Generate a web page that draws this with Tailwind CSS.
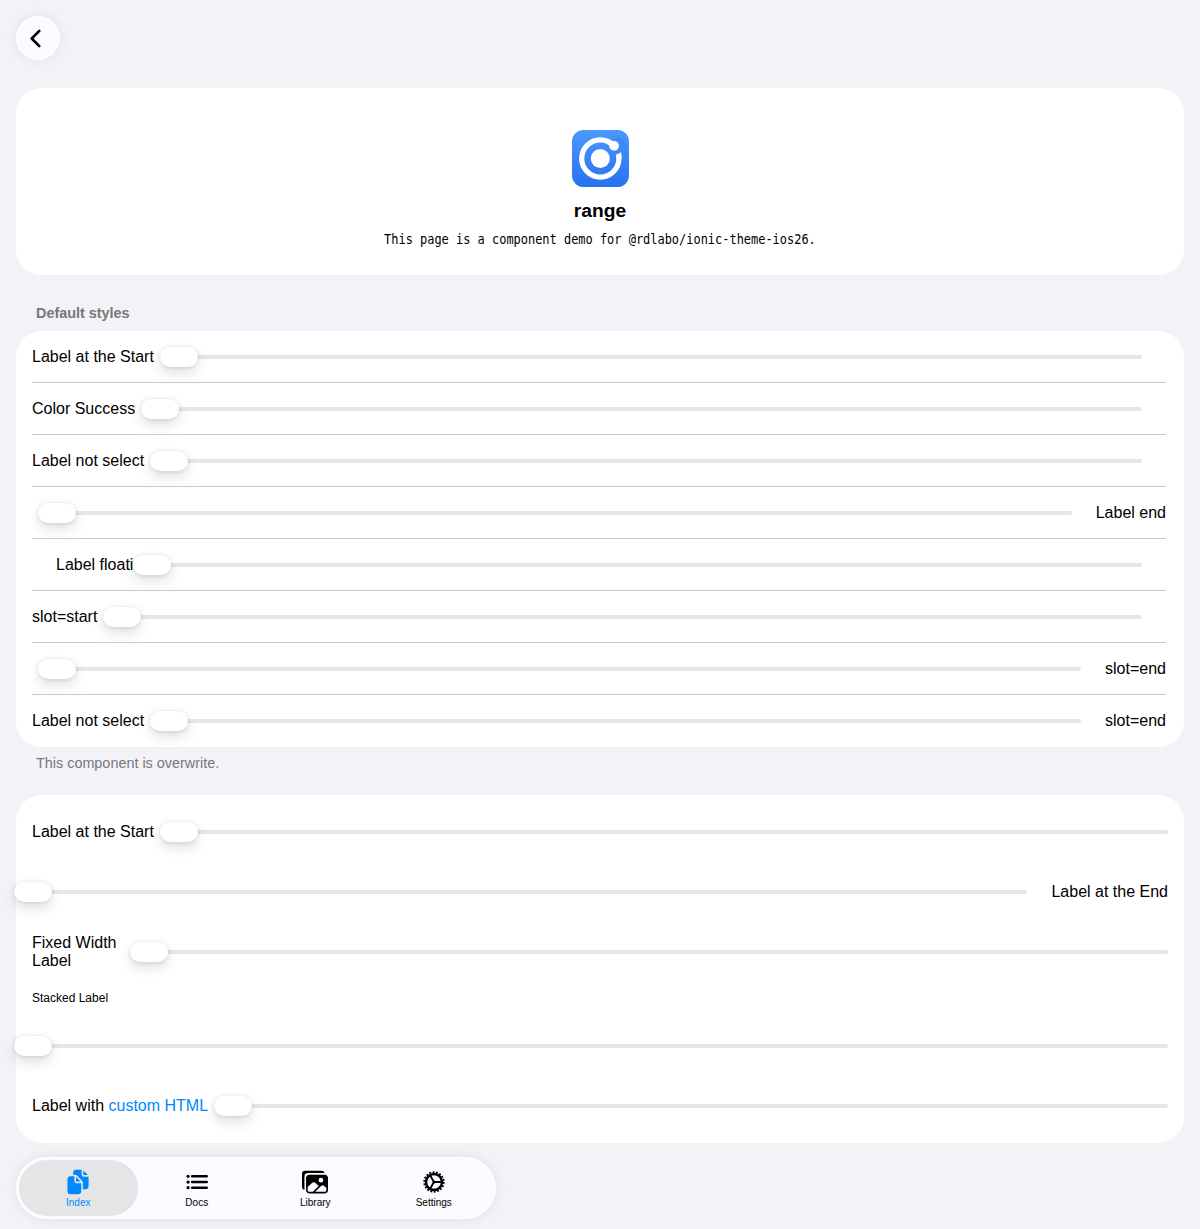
<!DOCTYPE html>
<html lang="en">
<head>
<meta charset="utf-8">
<title>range</title>
<script src="https://cdn.jsdelivr.net/npm/@tailwindcss/browser@4"></script>
</head>
<body class="h-[1229px] overflow-hidden bg-[#f2f2f7] px-4 font-['Liberation_Sans',Arial,sans-serif] text-base leading-[18px] text-black">
<header class="flex h-[88px] pt-4">
  <button class="flex size-11 items-center rounded-full bg-[#fafaff] pt-px pl-[6px] shadow-[inset_0_0_2px_1px_#fff,0_0_12px_rgba(0,0,0,0.08)]" aria-label="Back">
    <svg class="size-[27px]" viewBox="0 0 512 512" fill="none" stroke="#000" stroke-width="50" stroke-linecap="round" stroke-linejoin="round"><path d="M328 112 184 256l144 144"/></svg>
  </button>
</header>

<main>
  <section class="flex h-[187px] flex-col items-center rounded-[26px] bg-white pt-[42px]">
    <svg class="size-[57px] shrink-0" viewBox="0 0 57 57">
      <defs><linearGradient id="logo" x2="0" y2="1"><stop stop-color="#4a98ff"/><stop offset="1" stop-color="#2871f0"/></linearGradient></defs>
      <rect width="57" height="57" rx="11.5" fill="url(#logo)"/>
      <circle cx="28.3" cy="28.5" r="9.5" fill="#fff"/>
      <circle cx="28.3" cy="28.5" r="18.6" fill="none" stroke="#fff" stroke-width="5.2"/>
      <path d="m37 17 9-11 9 8-1 8-12 5z" fill="#3d88fb"/>
      <path d="M36.2 11.6a18.6 18.6 0 0 1 3.8 2.3" fill="none" stroke="#fff" stroke-width="5.2"/>
      <path d="M44 24.5q3.2-.6 5-2.6a22 22 0 0 1 .5 6.6h-5.2a17 17 0 0 0-.3-4z" fill="#fff"/>
      <circle cx="42.1" cy="15.9" r="4.9" fill="#fff"/>
    </svg>
    <h1 class="mt-3 text-[19.2px] leading-6 font-bold">range</h1>
    <p class="mt-[6px] scale-x-[0.8305] font-['DejaVu_Sans_Mono',monospace] text-[14.4px] leading-5 whitespace-nowrap">This page is a component demo for @rdlabo/ionic-theme-ios26.</p>
  </section>

  <h2 class="flex h-14 items-end px-5 pb-[9px] text-[14.4px] font-bold text-[#77777c]">Default styles</h2>
  <section class="overflow-hidden rounded-[26px] bg-white pr-[18px] pl-4">
    <div class="flex h-[52px] items-center overflow-hidden border-b border-[#c8c7cc]">
      <span class="w-[128px] shrink-0">Label at the Start</span>
      <div class="mr-6 flex h-1 flex-1 items-center rounded-full bg-[#e6e6e6]"><i class="h-5 w-[38px] rounded-full bg-white shadow-[0_0.5px_4px_rgba(0,0,0,0.12),0_6px_13px_rgba(0,0,0,0.12)]"></i></div>
    </div>
    <div class="flex h-[52px] items-center overflow-hidden border-b border-[#c8c7cc]">
      <span class="w-[109px] shrink-0">Color Success</span>
      <div class="mr-6 flex h-1 flex-1 items-center rounded-full bg-[#e6e6e6]"><i class="h-5 w-[38px] rounded-full bg-white shadow-[0_0.5px_4px_rgba(0,0,0,0.12),0_6px_13px_rgba(0,0,0,0.12)]"></i></div>
    </div>
    <div class="flex h-[52px] items-center overflow-hidden border-b border-[#c8c7cc]">
      <span class="w-[118px] shrink-0">Label not select</span>
      <div class="mr-6 flex h-1 flex-1 items-center rounded-full bg-[#e6e6e6]"><i class="h-5 w-[38px] rounded-full bg-white shadow-[0_0.5px_4px_rgba(0,0,0,0.12),0_6px_13px_rgba(0,0,0,0.12)]"></i></div>
    </div>
    <div class="flex h-[52px] items-center overflow-hidden border-b border-[#c8c7cc] pl-[6px]">
      <div class="mr-6 flex h-1 flex-1 items-center rounded-full bg-[#e6e6e6]"><i class="h-5 w-[38px] rounded-full bg-white shadow-[0_0.5px_4px_rgba(0,0,0,0.12),0_6px_13px_rgba(0,0,0,0.12)]"></i></div>
      <span>Label end</span>
    </div>
    <div class="flex h-[52px] items-center overflow-hidden border-b border-[#c8c7cc] pl-6">
      <span class="w-[77px] shrink-0 overflow-hidden whitespace-nowrap">Label floating</span>
      <div class="mr-6 flex h-1 flex-1 items-center rounded-full bg-[#e6e6e6]"><i class="h-5 w-[38px] rounded-full bg-white shadow-[0_0.5px_4px_rgba(0,0,0,0.12),0_6px_13px_rgba(0,0,0,0.12)]"></i></div>
    </div>
    <div class="flex h-[52px] items-center overflow-hidden border-b border-[#c8c7cc]">
      <span class="w-[71px] shrink-0">slot=start</span>
      <div class="mr-6 flex h-1 flex-1 items-center rounded-full bg-[#e6e6e6]"><i class="h-5 w-[38px] rounded-full bg-white shadow-[0_0.5px_4px_rgba(0,0,0,0.12),0_6px_13px_rgba(0,0,0,0.12)]"></i></div>
    </div>
    <div class="flex h-[52px] items-center overflow-hidden border-b border-[#c8c7cc] pl-[6px]">
      <div class="mr-6 flex h-1 flex-1 items-center rounded-full bg-[#e6e6e6]"><i class="h-5 w-[38px] rounded-full bg-white shadow-[0_0.5px_4px_rgba(0,0,0,0.12),0_6px_13px_rgba(0,0,0,0.12)]"></i></div>
      <span>slot=end</span>
    </div>
    <div class="flex h-[52px] items-center overflow-hidden border-b border-transparent">
      <span class="w-[118px] shrink-0">Label not select</span>
      <div class="mr-6 flex h-1 flex-1 items-center rounded-full bg-[#e6e6e6]"><i class="h-5 w-[38px] rounded-full bg-white shadow-[0_0.5px_4px_rgba(0,0,0,0.12),0_6px_13px_rgba(0,0,0,0.12)]"></i></div>
      <span>slot=end</span>
    </div>
  </section>
  <p class="h-12 px-5 pt-[7px] text-[14.4px] text-[#77777c]">This component is overwrite.</p>

  <section class="h-[348px] rounded-[26px] bg-white px-4 pt-[7px]">
    <div class="flex h-[60px] items-center">
      <span class="w-[128px] shrink-0">Label at the Start</span>
      <div class="flex h-1 flex-1 items-center rounded-full bg-[#e6e6e6]"><i class="h-5 w-[38px] rounded-full bg-white shadow-[0_0.5px_4px_rgba(0,0,0,0.12),0_6px_13px_rgba(0,0,0,0.12)]"></i></div>
    </div>
    <div class="-ml-[18px] flex h-[60px] items-center">
      <div class="mr-6 flex h-1 flex-1 items-center rounded-full bg-[#e6e6e6]"><i class="h-5 w-[38px] rounded-full bg-white shadow-[0_0.5px_4px_rgba(0,0,0,0.12),0_6px_13px_rgba(0,0,0,0.12)]"></i></div>
      <span>Label at the End</span>
    </div>
    <div class="flex h-[60px] items-center">
      <span class="w-[98px] shrink-0">Fixed Width<br>Label</span>
      <div class="flex h-1 flex-1 items-center rounded-full bg-[#e6e6e6]"><i class="h-5 w-[38px] rounded-full bg-white shadow-[0_0.5px_4px_rgba(0,0,0,0.12),0_6px_13px_rgba(0,0,0,0.12)]"></i></div>
    </div>
    <div class="flex h-[94px] flex-col pt-[9px]">
      <span class="text-xs leading-[14px]">Stacked Label</span>
      <div class="mt-[39px] -ml-[18px] flex h-1 items-center rounded-full bg-[#e6e6e6]"><i class="h-5 w-[38px] rounded-full bg-white shadow-[0_0.5px_4px_rgba(0,0,0,0.12),0_6px_13px_rgba(0,0,0,0.12)]"></i></div>
    </div>
    <div class="flex h-[60px] items-center">
      <span class="w-[182px] shrink-0">Label with <span class="text-[#0088ff]">custom HTML</span></span>
      <div class="flex h-1 flex-1 items-center rounded-full bg-[#e6e6e6]"><i class="h-5 w-[38px] rounded-full bg-white shadow-[0_0.5px_4px_rgba(0,0,0,0.12),0_6px_13px_rgba(0,0,0,0.12)]"></i></div>
    </div>
  </section>
</main>

<nav class="mt-[14px] grid h-[62px] w-[480px] grid-cols-4 rounded-full bg-[#fafaff] p-[3px] text-[10px] leading-3 shadow-[inset_0_0_2px_1px_#fff,0_0_12px_rgba(0,0,0,0.08)]">
  <a class="flex flex-col items-center rounded-full bg-[#e5e5e7] pt-[9px] text-[#0088ff]">
    <svg class="mb-[2px] size-[26px]" viewBox="0 0 512 512" fill="currentColor"><path d="M298.39 248a4 4 0 002.86-6.8l-78.4-79.72a4 4 0 00-6.85 2.81V236a12 12 0 0012 12z"/><path d="M197 267a43.67 43.67 0 01-13-31v-92h-72a64.19 64.19 0 00-64 64v224a64 64 0 0064 64h144a64 64 0 0064-64V280h-92a43.61 43.61 0 01-31-13zM372 120h70.39a4 4 0 002.86-6.8l-78.4-79.72a4 4 0 00-6.85 2.81V108a12 12 0 0012 12z"/><path d="M372 152a44.34 44.34 0 01-44-44V16H220a60.07 60.07 0 00-60 60v36h42.12A40.81 40.81 0 01231 124.14l109.16 111a41.11 41.11 0 0111.83 29V400h53.05c32.51 0 58.95-26.92 58.95-60V152z"/></svg>
    <span>Index</span>
  </a>
  <a class="flex flex-col items-center pt-[9px]">
    <svg class="mb-[2px] size-[26px]" viewBox="0 0 512 512" fill="none" stroke="#000" stroke-width="48" stroke-linecap="round"><path d="M160 144h288M160 256h288M160 368h288"/><g stroke-width="32"><circle cx="80" cy="144" r="16"/><circle cx="80" cy="256" r="16"/><circle cx="80" cy="368" r="16"/></g></svg>
    <span>Docs</span>
  </a>
  <a class="flex flex-col items-center pt-[9px]">
    <svg class="mb-[2px] size-[26px]" viewBox="0 0 512 512"><path d="M450.29 112H142c-34 0-62 27.51-62 61.33v245.34c0 33.82 28 61.33 62 61.33h308c34 0 62-26.18 62-60V173.33c0-33.82-27.68-61.33-61.71-61.33zm-77.15 61.34a46 46 0 11-46.28 46 46.19 46.19 0 0146.28-46zm-231.55 276c-17 0-29.86-13.75-29.86-30.66v-64.83l90.46-80.79a46.54 46.54 0 0163.44 1.83L328.27 337l-113 112.33zM480 418.67a30.67 30.67 0 01-30.71 30.66H259L376.08 333a46.24 46.24 0 0159.44-.16L480 370.59z"/><path d="M384 32H64A64 64 0 000 96v256a64.11 64.11 0 0048 62V152a72 72 0 0172-72h326a64.11 64.11 0 00-62-48z"/></svg>
    <span>Library</span>
  </a>
  <a class="flex flex-col items-center pt-[9px]">
    <svg class="mb-[2px] size-[26px]" viewBox="0 0 512 512" fill="none" stroke="#000"><circle cx="256" cy="256" r="158" stroke-width="48"/><circle cx="256" cy="256" r="192" stroke-width="36" stroke-dasharray="37 30.02"/><circle cx="256" cy="256" r="30" fill="#000" stroke="none"/><path stroke-width="38" d="M270 256h144M248 244l-71-125M248 268l-71 125"/></svg>
    <span>Settings</span>
  </a>
</nav>
</body>
</html>
